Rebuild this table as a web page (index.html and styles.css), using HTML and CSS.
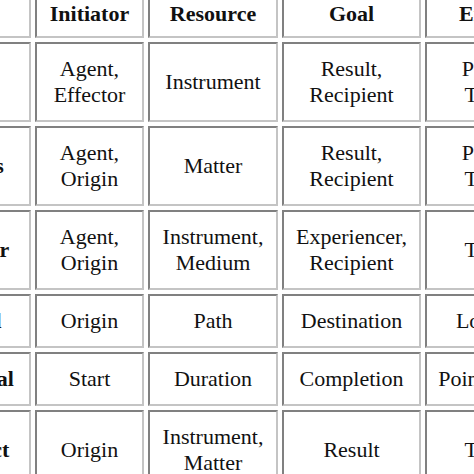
FILE: index.html
```html
<!DOCTYPE html>
<html lang="en">
<head>
<meta charset="utf-8">
<title>Roles table</title>
<link rel="stylesheet" href="styles.css">
</head>
<body>
<table class="roles">
  <colgroup>
    <col class="c0"><col class="c1"><col class="c2"><col class="c3"><col class="c4">
  </colgroup>
  <thead>
    <tr class="head">
      <th>Type</th>
      <th>Initiator</th>
      <th>Resource</th>
      <th>Goal</th>
      <th>Entities</th>
    </tr>
  </thead>
  <tbody>
    <tr>
      <th>Action</th>
      <td>Agent,<br>Effector</td>
      <td>Instrument</td>
      <td>Result,<br>Recipient</td>
      <td>Patient,<br>Theme</td>
    </tr>
    <tr>
      <th>Process</th>
      <td>Agent,<br>Origin</td>
      <td>Matter</td>
      <td>Result,<br>Recipient</td>
      <td>Patient,<br>Theme</td>
    </tr>
    <tr>
      <th>Transfer</th>
      <td>Agent,<br>Origin</td>
      <td>Instrument,<br>Medium</td>
      <td>Experiencer,<br>Recipient</td>
      <td>Theme</td>
    </tr>
    <tr>
      <th>Spatial</th>
      <td>Origin</td>
      <td>Path</td>
      <td>Destination</td>
      <td>Location</td>
    </tr>
    <tr>
      <th>Temporal</th>
      <td>Start</td>
      <td>Duration</td>
      <td>Completion</td>
      <td>Point in time</td>
    </tr>
    <tr>
      <th>Abstract</th>
      <td>Origin</td>
      <td>Instrument,<br>Matter</td>
      <td>Result</td>
      <td>Theme</td>
    </tr>
  </tbody>
</table>
</body>
</html>
```

FILE: styles.css
```css
html, body {
  margin: 0;
  padding: 0;
  overflow: hidden;
  background: #ffffff;
}

.roles {
  margin: -20px 0 0 -98px;
  table-layout: fixed;
  width: 667px;
  border-collapse: separate;
  border-spacing: 4px;
  font-family: "Liberation Serif", "Times New Roman", serif;
  font-size: 22px;
  line-height: 26px;
  color: #111;
}

.c0 { width: 125px; }
.c1 { width: 109px; }
.c2 { width: 130px; }
.c3 { width: 139px; }
.c4 { width: 140px; }

.roles th,
.roles td {
  box-sizing: border-box;
  padding: 12px 4px;
  text-align: center;
  vertical-align: middle;
  white-space: nowrap;
  border-style: solid;
  border-width: 2px;
  border-top-color: #808080;
  border-left-color: #808080;
  border-right-color: #c4c4c4;
  border-bottom-color: #c4c4c4;
}

.roles .head th {
  padding-top: 15px;
  padding-bottom: 9px;
}

.roles th {
  font-weight: bold;
}

.roles td {
  font-weight: normal;
}
```
